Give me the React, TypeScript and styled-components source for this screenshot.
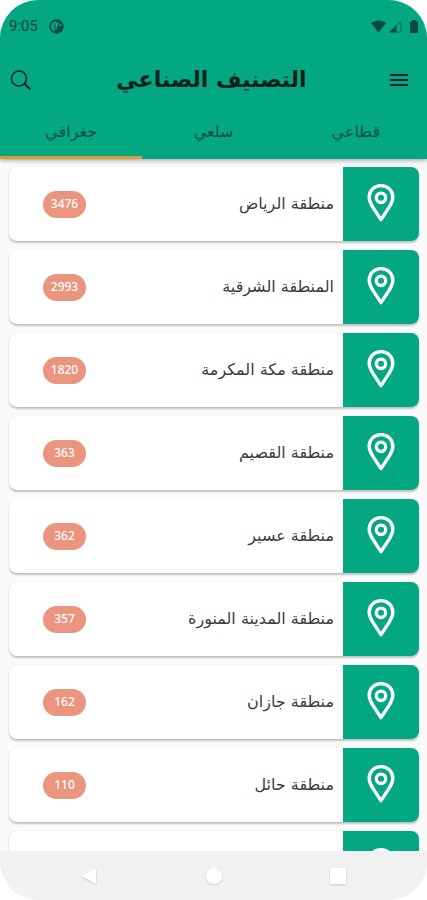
import React, { useState } from "react";
import styled, { createGlobalStyle } from "styled-components";

const GREEN = "#03a781";
const ARABIC = '"DejaVu Sans", "Noto Sans", sans-serif';

const GlobalStyle = createGlobalStyle`
  *, *::before, *::after { box-sizing: border-box; }
  body { margin: 0; background: #fff; font-family: ${ARABIC}; }
  button { border: 0; padding: 0; margin: 0; background: none; font: inherit; color: inherit; cursor: pointer; }
`;

const Screen = styled.div`
  display: flex;
  flex-direction: column;
  height: 100vh;
  overflow: hidden;
  border-radius: 38px;
  background: #fafafa;
`;

const Header = styled.header`
  position: relative;
  flex: none;
  background: ${GREEN};
  color: #07251e;
  box-shadow: 0 1px 5px rgba(0, 0, 0, 0.4);
`;

const StatusBar = styled.div`
  display: flex;
  align-items: center;
  height: 52px;
  padding: 0 8px 0 9px;
  color: #07493a;
`;

const Clock = styled.time`
  font: 400 15px/20px Roboto, sans-serif;
  margin-right: 11px;
`;

const StatusIcons = styled.div`
  display: flex;
  align-items: center;
  gap: 3px;
  margin-left: auto;
`;

const TitleBar = styled.div`
  display: flex;
  align-items: center;
  justify-content: space-between;
  height: 56px;
  padding: 0 19px 0 9px;
`;

const IconButton = styled.button`
  display: flex;
  align-items: center;
  justify-content: center;
  height: 40px;
`;

const Title = styled.h1`
  margin: 0;
  font-size: 22px;
  line-height: 32px;
  font-weight: 700;
  color: #06211b;
`;

const Tabs = styled.div`
  display: grid;
  grid-template-columns: repeat(3, 1fr);
  height: 51px;
`;

const Tab = styled.button<{ $active: boolean }>`
  height: 51px;
  border-bottom: 3px solid ${(p) => (p.$active ? "#d99a3c" : "transparent")};
  font-size: 16px;
  line-height: 20px;
  color: #075241;
`;

const List = styled.ul`
  flex: 1;
  min-height: 0;
  display: flex;
  flex-direction: column;
  gap: 9px;
  margin: 0;
  padding: 8px 8px 0 9px;
  overflow: hidden;
  list-style: none;
`;

const Card = styled.li`
  flex: none;
  display: flex;
  height: 74px;
  border-radius: 8px;
  background: #fff;
  box-shadow: 0 2px 2px rgba(0, 0, 0, 0.22), 0 0 1px rgba(0, 0, 0, 0.12);
`;

const CardButton = styled.button`
  flex: 1;
  display: flex;
  align-items: center;
  text-align: start;
`;

const PinTile = styled.span`
  display: flex;
  align-items: center;
  justify-content: center;
  width: 76px;
  height: 74px;
  padding-bottom: 2px;
  border-radius: 0 8px 8px 0;
  background: ${GREEN};
`;

const Region = styled.span`
  flex: 1;
  padding-inline-start: 9px;
  font-size: 16px;
  line-height: 24px;
  color: #3c3c3c;
`;

const Count = styled.span`
  width: 43px;
  height: 27px;
  margin-inline-end: 34px;
  border-radius: 14px;
  background: #eb947e;
  color: #fff;
  font: 500 12px/26px "Noto Sans", sans-serif;
  text-align: center;
`;

const NavBar = styled.nav`
  position: relative;
  flex: none;
  display: flex;
  align-items: center;
  justify-content: space-between;
  height: 49px;
  padding: 0 78px;
  background: #f1f1f1;
`;

const NavIcon = styled.svg`
  display: block;
  filter: drop-shadow(0 1px 1px rgba(0, 0, 0, 0.16));
`;

const Pin = () => (
  <svg width="28" height="40" viewBox="0 0 28 40" fill="none" stroke="#fff" aria-hidden="true">
    <path
      d="M14 2.6C7.4 2.6 2.2 7.5 2.2 14.2c0 3.3 1.5 6.4 3.4 9.7L14 36.6l8.4-12.7c1.9-3.3 3.4-6.4 3.4-9.7C25.8 7.5 20.6 2.6 14 2.6Z"
      strokeWidth="3.4"
      strokeLinejoin="round"
    />
    <circle cx="14" cy="14.8" r="4.7" strokeWidth="3.3" />
  </svg>
);

const regions = [
  { name: "منطقة الرياض", count: 3476 },
  { name: "المنطقة الشرقية", count: 2993 },
  { name: "منطقة مكة المكرمة", count: 1820 },
  { name: "منطقة القصيم", count: 363 },
  { name: "منطقة عسير", count: 362 },
  { name: "منطقة المدينة المنورة", count: 357 },
  { name: "منطقة جازان", count: 162 },
  { name: "منطقة حائل", count: 110 },
  { name: "", count: null },
];

const tabs = ["قطاعي", "سلعي", "جغرافي"];

export default function App() {
  const [active, setActive] = useState(2);
  return (
    <>
      <GlobalStyle />
      <Screen>
        <Header>
          <StatusBar>
            <Clock>9:05</Clock>
            <svg width="15" height="15" viewBox="0 0 15 15" aria-hidden="true">
              <circle cx="7.5" cy="7.5" r="7.2" fill="currentColor" />
              <path d="M7 2.3C3.9 2.5 2 4.8 2 7.5c0 2.2 1.400 4.200 3.500 5L5.500 4.500H7Z" fill={GREEN} />
              <path d="M7 3.300h2.500v4H8v3.200H6.300V5H7Z" fill={GREEN} />
              <path d="M10.500 3.800 12.500 5.500v2h-2Z" fill={GREEN} />
            </svg>
            <StatusIcons>
              <svg width="15" height="13" viewBox="0 0 15 13" aria-hidden="true">
                <path d="M0 3C4.5-.4 10.500-.4 15 3L7.500 12.500Z" fill="currentColor" />
              </svg>
              <svg width="13" height="13" viewBox="0 0 13 13" aria-hidden="true">
                <path d="M0 12.500 7.500 5v7.500Z" fill="currentColor" />
                <path d="M1.500 12 12 1.500V12Z" fill="none" stroke="currentColor" opacity="0.6" />
              </svg>
              <svg width="14" height="13" viewBox="0 0 14 13" aria-hidden="true">
                <path d="M5 1.500H7V0h4v1.500h2V13H5Z" fill="currentColor" />
              </svg>
            </StatusIcons>
          </StatusBar>
          <TitleBar dir="rtl">
            <IconButton aria-label="القائمة">
              <svg width="18" height="12" viewBox="0 0 18 12" fill="none" stroke="currentColor" strokeWidth="2">
                <path d="M0 1h18M0 6h18M0 11h18" />
              </svg>
            </IconButton>
            <Title>التصنيف الصناعي</Title>
            <IconButton aria-label="بحث">
              <svg width="24" height="22" viewBox="0 0 24 22" fill="none" stroke="currentColor" aria-hidden="true">
                <circle cx="10" cy="9.5" r="7.5" strokeWidth="1.6" />
                <path d="m15.500 14.800 6 5.700" strokeWidth="2" />
              </svg>
            </IconButton>
          </TitleBar>
          <Tabs role="tablist" dir="rtl">
            {tabs.map((t, i) => (
              <Tab key={t} role="tab" aria-selected={active === i} $active={active === i} onClick={() => setActive(i)}>
                {t}
              </Tab>
            ))}
          </Tabs>
        </Header>
        <List dir="rtl">
          {regions.map((r) => (
            <Card key={r.name}>
              <CardButton>
                <PinTile>
                  <Pin />
                </PinTile>
                <Region>{r.name}</Region>
                {r.count !== null && <Count>{r.count}</Count>}
              </CardButton>
            </Card>
          ))}
        </List>
        <NavBar aria-label="Android">
          <button aria-label="Back">
            <NavIcon width="22" height="20" viewBox="0 0 22 20">
              <path d="M4 10 18 2v16Z" fill="#fff" />
            </NavIcon>
          </button>
          <button aria-label="Home">
            <NavIcon width="22" height="20" viewBox="0 0 22 20">
              <circle cx="11" cy="10" r="8" fill="#fff" />
            </NavIcon>
          </button>
          <button aria-label="Recents">
            <NavIcon width="22" height="20" viewBox="0 0 22 20">
              <path d="M3 2h16v16H3Z" fill="#fff" />
            </NavIcon>
          </button>
        </NavBar>
      </Screen>
    </>
  );
}
